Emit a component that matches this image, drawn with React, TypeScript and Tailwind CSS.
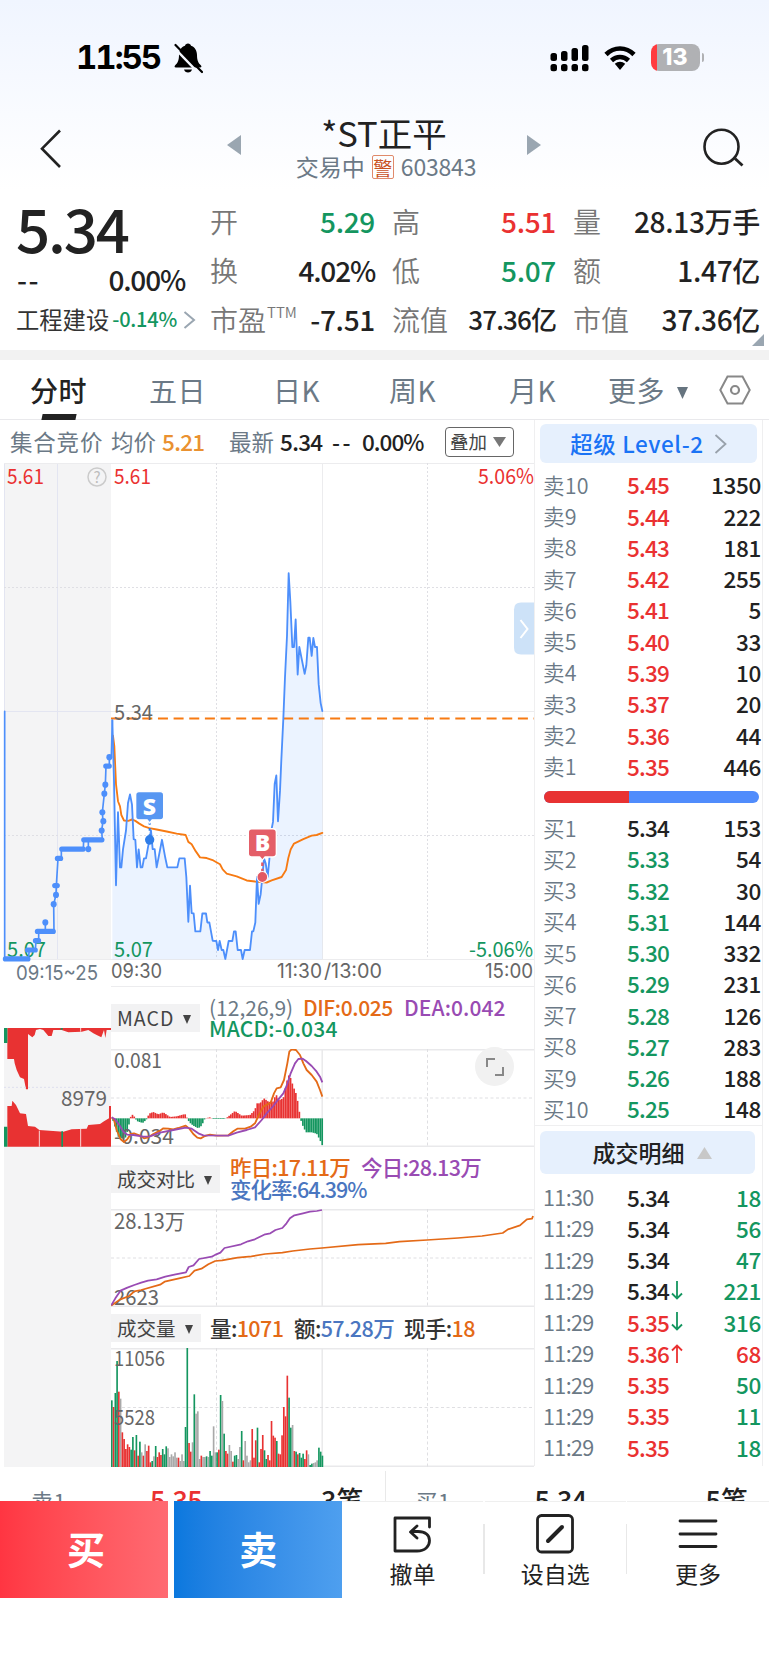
import type { ReactNode } from "react";
import clsx from "clsx";

type Tone = "red" | "green" | "black" | "orange" | "purple" | "blue" | "gray";

const toneClass: Record<Tone, string> = {
  red: "text-[#ea3131]",
  green: "text-[#14965f]",
  black: "text-[#222222]",
  orange: "text-[#e46a17]",
  purple: "text-[#994bb3]",
  blue: "text-[#4a76c0]",
  gray: "text-[#6b7986]",
};

const RED = "#e83232";
const GREEN = "#14965f";
const GRAY = "#a9a9a9";
const BLUE = "#4d8ffb";
const ORANGE = "#e46a17";
const PURPLE = "#994bb3";

const sells = [
  ["卖10", "5.45", "1350"],
  ["卖9", "5.44", "222"],
  ["卖8", "5.43", "181"],
  ["卖7", "5.42", "255"],
  ["卖6", "5.41", "5"],
  ["卖5", "5.40", "33"],
  ["卖4", "5.39", "10"],
  ["卖3", "5.37", "20"],
  ["卖2", "5.36", "44"],
  ["卖1", "5.35", "446"],
];

const buys = [
  ["买1", "5.34", "153"],
  ["买2", "5.33", "54"],
  ["买3", "5.32", "30"],
  ["买4", "5.31", "144"],
  ["买5", "5.30", "332"],
  ["买6", "5.29", "231"],
  ["买7", "5.28", "126"],
  ["买8", "5.27", "283"],
  ["买9", "5.26", "188"],
  ["买10", "5.25", "148"],
];

const trades: { time: string; price: string; tone: Tone; dir?: "up" | "down"; vol: string; volTone: Tone }[] = [
  { time: "11:30", price: "5.34", tone: "black", vol: "18", volTone: "green" },
  { time: "11:29", price: "5.34", tone: "black", vol: "56", volTone: "green" },
  { time: "11:29", price: "5.34", tone: "black", vol: "47", volTone: "green" },
  { time: "11:29", price: "5.34", tone: "black", dir: "down", vol: "221", volTone: "green" },
  { time: "11:29", price: "5.35", tone: "red", dir: "down", vol: "316", volTone: "green" },
  { time: "11:29", price: "5.36", tone: "red", dir: "up", vol: "68", volTone: "red" },
  { time: "11:29", price: "5.35", tone: "red", vol: "50", volTone: "green" },
  { time: "11:29", price: "5.35", tone: "red", vol: "11", volTone: "green" },
  { time: "11:29", price: "5.35", tone: "red", vol: "18", volTone: "green" },
];

// Charts keep their points at about three units per pixel, scaled down in the svg groups
const pricePoints =
  "337,785 342,960 348,1264 354,1052 360,1212 364,1212 369,1160 378,1105 384,1025 390,1000 396,1030 401,1130 406,1132 411,1212 416,1160 422,1212 427,1212 432,1186 438,1186 448,1132 453,1105 458,1159 464,1159 470,1212 486,1132 496,1185 502,1212 532,1212 538,1186 554,1186 559,1240 565,1370 570,1265 575,1345 581,1346 586,1398 601,1398 607,1346 618,1346 622,1372 628,1372 638,1425 649,1426 654,1452 659,1426 665,1452 670,1452 676,1478 686,1426 697,1426 702,1398 707,1398 713,1452 723,1452 728,1478 734,1452 750,1452 756,1398 760,1398 766,1372 771,1240 776,1318 782,1290 787,1240 792,1186 797,1200 803,1240 808,1190 814,1105 819,1080 824,970 829,945 834,1078 840,990 844,900 850,780 855,660 861,540 866,358 871,440 877,572 882,572 887,492 893,652 898,572 914,650 919,625 925,545 929,545 935,598 940,546 945,572 951,572 956,680 962,735 967,758";

const avgPoints =
  "339,830 343,860 348,970 354,1020 360,1035 364,1060 372,1076 385,1077 396,1073 406,1077 418,1085 432,1093 448,1098 470,1102 500,1108 530,1114 557,1118 565,1138 575,1145 587,1165 600,1183 620,1185 640,1192 660,1203 668,1218 680,1230 710,1238 740,1250 765,1253 800,1256 815,1250 845,1240 858,1220 865,1185 872,1160 882,1143 910,1130 935,1120 950,1118 967,1112";

const auctionPoints =
  "14,759 14,1478 85,1478 88,1452 106,1452 108,1425 116,1425 116,1398 136,1398 136,1372 136,1398 162,1398 161,1319 168,1292 169,1265 174,1186 184,1186 184,1159 250,1159 251,1132 265,1132 265,1159 265,1132 307,1132 305,1105 309,1078 307,1052 313,998 316,972 318,918 328,918 328,892 334,892 337,785";

const auctionRuns = [
  [16, 84, 1478],
  [82, 106, 1452],
  [106, 116, 1425],
  [112, 160, 1398],
  [172, 182, 1186],
  [185, 250, 1159],
  [251, 306, 1132],
  [317, 328, 918],
  [164, 172, 1265],
];

const auctionDots = [
  [136, 1372], [161, 1319], [168, 1292], [265, 1159], [305, 1105], [310, 1078],
  [307, 1052], [313, 998], [316, 972], [328, 892],
];

const difPoints =
  "335,412 342,420 350,450 362,478 372,486 382,478 392,462 402,460 418,466 432,475 445,472 460,462 480,452 490,445 505,446 520,448 535,444 557,437 568,446 580,462 592,473 602,475 615,468 630,464 650,467 685,466 700,454 712,446 735,446 752,440 765,430 775,408 790,380 812,368 822,340 830,325 842,322 852,300 862,250 868,215 875,208 888,210 900,225 910,250 920,270 935,285 950,305 960,330 967,350";

const deaPoints =
  "335,412 345,418 358,435 370,455 382,464 400,465 430,470 450,469 480,458 520,450 557,443 575,446 595,460 610,466 685,467 710,458 740,450 765,442 785,420 800,400 820,378 835,358 850,340 862,312 872,280 885,250 895,237 908,236 918,243 935,258 950,275 960,290 967,307";

const macdKeys = [
  [337, 0], [345, -25], [355, -55], [365, -60], [375, -62], [385, -30], [390, 0], [396, 12], [405, 3],
  [410, -8], [428, -14], [438, -5], [442, 0], [447, 14], [460, 19], [475, 12], [490, 18], [510, 4], [530, 6],
  [555, 13], [562, 0], [568, -12], [580, -22], [595, -30], [605, -22], [615, 0], [630, 3], [640, -2],
  [675, -2], [683, 4], [705, 22], [725, 8], [750, 10], [765, 25], [770, 45], [780, 45], [792, 60],
  [805, 50], [818, 48], [828, 72], [838, 55], [850, 60], [860, 110], [868, 133], [880, 95], [890, 70],
  [900, 8], [905, -15], [918, -42], [935, -42], [950, -46], [960, -65], [970, -88],
];

const macdAt = (x: number) => {
  for (let i = 1; i < macdKeys.length; i++) {
    const [x0, v0] = macdKeys[i - 1];
    const [x1, v1] = macdKeys[i];
    if (x <= x1) return v0 + ((v1 - v0) * (x - x0)) / (x1 - x0);
  }
  return 0;
};

const todayPoints =
  "323,466 335,445 350,422 370,413 390,405 410,398 430,392 455,388 480,380 510,373 540,367 548,351 562,346 578,327 615,320 628,313 640,308 652,294 700,283 720,274 740,268 770,253 785,250 800,240 820,234 832,220 842,205 855,196 880,190 900,185 920,183 935,180";

const yesterdayPoints =
  "323,467 350,448 375,438 390,424 410,420 465,404 478,395 520,385 550,378 565,362 585,356 605,343 625,333 645,331 690,323 730,319 770,312 820,308 850,303 900,297 935,294 1040,284 1120,280 1160,275 1240,270 1330,264 1400,258 1460,249 1475,238 1510,226 1530,208 1545,206 1548,198";

// r = up, g = down, y = flat
const volumes =
  "g200 r180 g222 g318 r226 y205 r104 r84 r54 r68 r60 g52 g90 r50 g96 r34 g76 y44 r34 y68 r48 r64 r14 g18 y32 g63 r30 r44 r36 g54 g38 g62 y56 y30 y38 y32 y44 y28 r28 y18 y38 y18 g120 g357 r72 r46 y74 g218 y160 y167 y24 r34 y30 y30 g32 y30 g48 g34 y122 y44 g44 r52 g216 y198 g100 r48 r40 y66 y48 r16 g34 g36 y24 y60 g108 r20 y78 y34 y14 y20 r114 r28 r80 g118 r14 r54 r96 g50 g24 r36 r20 r138 r94 r88 g78 r40 r38 r95 r180 r152 r274 g208 g118 y126 r48 g46 r38 g42 g28 g40 r24 r50 y38 g6 g10 y12 y14 y20 g58 g46 g34"
    .split(" ");

const volumeColor: Record<string, string> = { r: RED, g: GREEN, y: GRAY };

type LabelProps = {
  x: number;
  y: number;
  w?: number;
  size?: number;
  fill?: string;
  children: string;
};

const Label = ({ x, y, w, size = 21, fill = "#666666", children }: LabelProps) => (
  <text x={x} y={y} fontSize={size} fill={fill} textLength={w} lengthAdjust="spacingAndGlyphs">
    {children}
  </text>
);

const StatusBar = () => (
  <div className="flex h-[115px] items-center pl-[76px] pr-[65px]">
    <span className="w-[97px] whitespace-nowrap font-['Inter'] text-[33px] font-bold tabular-nums leading-none tracking-[-2px] text-black">11:55</span>
    <svg className="h-[32px] w-[30px]" viewBox="0 0 30 32">
      <path d="M15 1.500c-1.600 0-2.700 1-3 2.200C8.200 5 6 8.500 6 13c0 6-1.500 8-4 10.500-.8 1-.4 2 .8 2h24.400c1.200 0 1.600-1 .8-2C25.500 21 24 19 24 13c0-4.500-2.200-8-6-9.300-.3-1.200-1.400-2.200-3-2.200z" />
      <path d="M11 27.500h8c-.5 1.900-2 3-4 3s-3.500-1.100-4-3z" />
      <path d="M.5 5l26 27" stroke="#f5f8ff" strokeWidth="2.400" />
      <path d="M2.500 3l26.500 27" stroke="#000" strokeWidth="2.200" strokeLinecap="round" />
    </svg>
    <svg className="ml-auto mr-[14px] h-[28px] w-[39px]" viewBox="0 0 39 28">
      {[9, 7, 4, 1].map((top, i) => (
        <g key={top}>
          <rect x={0.500 + i * 10.500} y={top} width="6.500" height={17 - top} rx="2.500" />
          <rect x={0.500 + i * 10.500} y="20" width="6.500" height="7.300" rx="2.500" />
        </g>
      ))}
    </svg>
    <svg className="mr-[14px] h-[26px] w-[34px]" viewBox="0 0 34 26">
      <path d="M3 9.500c8-8 20-8 28 0" fill="none" stroke="#000" strokeWidth="4.600" />
      <path d="M8.500 15.500c5-4.700 12-4.700 17 0" fill="none" stroke="#000" strokeWidth="4.600" />
      <path d="M17 25l-5.200-6.300c3-2.700 7.400-2.700 10.400 0z" />
    </svg>
    <div className="flex items-center">
      <div className="flex h-[27px] w-[49px] items-center justify-center rounded-[8px] bg-linear-to-r from-[#ff3b3f] from-[13%] to-[#b0b1b4] to-[13%] font-['Inter'] text-[23px] font-extrabold leading-none text-white">
        13
      </div>
      <div className="ml-[2px] h-[9px] w-[2.500px] rounded-r-full bg-[#b0b1b4]" />
    </div>
  </div>
);

const NavBar = () => (
  <div className="flex h-[75px] justify-between pl-[39px] pr-[24px]">
    <svg className="mt-[14px] h-[40px] w-[24px]" viewBox="0 0 24 40">
      <path d="M21 1.500L3 19.700 21 38" fill="none" stroke="#222" strokeWidth="2.600" />
    </svg>
    <div className="mr-[-2px] flex gap-[51px]">
      <svg className="mt-[20px] h-[20px] w-[14px]" viewBox="0 0 14 20">
        <path d="M14 0v20L0 10z" fill="#9aa6b1" />
      </svg>
      <div className="flex w-[184px] flex-col items-center">
        <h1 className="-mt-[1px] whitespace-nowrap text-[34.500px] leading-[37px] text-[#222]">*ST正平</h1>
        <div className="-mt-[1px] ml-[4px] flex items-center gap-[7px] whitespace-nowrap text-[23px] leading-[32px] text-[#6b7986]">
          交易中
          <span className="mt-[2px] flex h-[24px] w-[22px] items-center justify-center rounded-[2px] border border-[#e08a6b] text-[19px] leading-none text-[#c9521f]">警</span>
          <span className="tracking-[-0.200px]">603843</span>
        </div>
      </div>
      <svg className="mt-[20px] h-[20px] w-[14px]" viewBox="0 0 14 20">
        <path d="M0 0v20l14-10z" fill="#9aa6b1" />
      </svg>
    </div>
    <svg className="mt-[12px] h-[42px] w-[42px]" viewBox="0 0 42 42">
      <circle cx="18.500" cy="19.700" r="17" fill="none" stroke="#222" strokeWidth="2.600" />
      <path d="M32 31.500l7.500 7" stroke="#222" strokeWidth="2.800" />
    </svg>
  </div>
);

const Stat = ({ label, value, tone = "black", sup, tight }: { label: string; value: string; tone?: Tone; sup?: string; tight?: boolean }) => (
  <div className="flex items-center justify-between whitespace-nowrap text-[28px] leading-none">
    <span className="font-[350] text-[#777]">
      {label}
      {sup && <sup className="-top-[13px] ml-[1px] text-[15px] leading-none">{sup}</sup>}
    </span>
    <span
      className={clsx(
        "font-medium",
        toneClass[tone],
        tight ? "text-[26px] tracking-[-0.900px]" : value.endsWith("%") ? "tracking-[-1.200px]" : "tracking-[-0.300px]"
      )}
    >
      {value}
    </span>
  </div>
);

const Quote = () => (
  <div className="relative flex h-[160px] pr-[8px]">
    <div className="w-[210px] shrink-0 pl-[16px]">
      <div className="mt-[5px] text-[60px] font-medium leading-[64px] tracking-[-2.200px] text-[#222]">5.34</div>
      <div className="mt-[4px] flex justify-between pl-[1px] pr-[25px] text-[28px] font-medium leading-[32px] tracking-[-1.200px] text-[#222]">
        <span className="tracking-[1.500px]">--</span>
        <span>0.00%</span>
      </div>
      <div className="mt-[8px] flex items-center whitespace-nowrap text-[23.300px] leading-[32px] text-[#333]">
        工程建设
        <span className="ml-[3px] text-[20px] font-medium tracking-[-0.200px] text-[#14965f]">-0.14%</span>
        <svg className="ml-[6px] mt-[2px] h-[18px] w-[13px]" viewBox="0 0 13 18">
          <path d="M1.500 1l9.500 8-9.500 8" fill="none" stroke="#9aa6b1" strokeWidth="2" />
        </svg>
      </div>
    </div>
    <div className="grid h-[153px] flex-1 grid-cols-[165px_164px_187px] grid-rows-3 gap-x-[17px] pt-[6px]">
      <Stat label="开" value="5.29" tone="green" />
      <Stat label="高" value="5.51" tone="red" />
      <Stat label="量" value="28.13万手" />
      <Stat label="换" value="4.02%" />
      <Stat label="低" value="5.07" tone="green" />
      <Stat label="额" value="1.47亿" />
      <Stat label="市盈" sup="TTM" value="-7.51" />
      <Stat label="流值" value="37.36亿" tight />
      <Stat label="市值" value="37.36亿" />
    </div>
    <svg className="absolute bottom-[4px] right-[5px] h-[12px] w-[12px]" viewBox="0 0 12 12">
      <path d="M12 0v12H0z" fill="#9aa6b1" />
    </svg>
  </div>
);

const Tabs = () => (
  <div className="flex h-[60px] items-center border-b-[1.500px] border-[#e9e9ec] text-[28px] leading-none tracking-[0.600px] text-[#6b7986]">
    <div className="relative ml-[30px] w-[119px] font-medium text-[#222]">
      分时
      <div className="absolute -bottom-[16px] left-[12px] h-[6px] w-[34px] -skew-x-12 bg-[#222]" />
    </div>
    <div className="w-[124px]">五日</div>
    <div className="w-[116px]">日K</div>
    <div className="w-[120px]">周K</div>
    <div className="w-[99px]">月K</div>
    <div className="w-[69px]">更多</div>
    <svg className="mt-[7px] h-[12px] w-[11px]" viewBox="0 0 12 13">
      <path d="M0 0h12L6 13z" fill="#66747f" />
    </svg>
    <svg className="ml-[31px] h-[30px] w-[32px]" viewBox="0 0 32 30">
      <path d="M8.500 1.500h15L30.700 15l-7.200 13.500h-15L1.300 15z" fill="none" stroke="#888" strokeWidth="2" />
      <circle cx="16" cy="15" r="4" fill="none" stroke="#888" strokeWidth="2.200" />
    </svg>
  </div>
);

const InfoRow = () => (
  <div className="flex h-[43px] items-center whitespace-nowrap pl-[10px] text-[22.500px] leading-none text-[#6b7986]">
    <span className="w-[101px] tracking-[0.800px]">集合竞价</span>
    <span>均价</span>
    <span className="ml-[6px] w-[67px] font-medium tracking-[-0.700px] text-[#ea9130]">5.21</span>
    <span>最新</span>
    <span className="ml-[6px] w-[52px] font-medium tracking-[-0.700px] text-[#222]">5.34</span>
    <span className="w-[30px] font-medium tracking-[2.500px] text-[#222]">--</span>
    <span className="w-[83px] font-medium tracking-[-1px] text-[#222]">0.00%</span>
    <span className="flex h-[30px] w-[69px] items-center gap-[6px] rounded-[4px] border-[1.500px] border-[#666] pl-[4px] text-[18.500px] text-[#444]">
      叠加
      <svg className="h-[10px] w-[13px]" viewBox="0 0 13 10">
        <path d="M0 0h13L6.500 10z" fill="#777" />
      </svg>
    </span>
  </div>
);

const PriceChart = () => (
  <svg className="block h-[523px] w-[534px]" viewBox="0 463 534 523">
    <rect x="4" y="463" width="107" height="496" fill="#f4f4f5" />
    <path d="M4.500 463v496M57.500 463v496M4 711.500h107" stroke="#e3e5f1" />
    <path d="M4 463.500h530M111 711.500h423M4 959.500h530M322.500 463v496" stroke="#ececee" />
    <path d="M4 587.500h530M4 835.500h530M216.500 463v496M427.500 463v496" stroke="#dfdfe4" strokeDasharray="2 2" />
    <g transform="translate(0 450) scale(0.33333 0.34435)">
      <polygon points={`337,1479 ${pricePoints} 967,1479`} fill={BLUE} fillOpacity="0.110" />
    </g>
    <path d="M111 718.500h423" stroke="#f77a12" strokeWidth="2" strokeDasharray="10 5.650" />
    <Label x={7} y={484} w={37} fill="#ea3131">5.61</Label>
    <Label x={114} y={484} w={37} fill="#ea3131">5.61</Label>
    <Label x={114} y={719.500} w={39}>5.34</Label>
    <Label x={7} y={956.500} w={39} fill={GREEN}>5.07</Label>
    <Label x={114} y={956.500} w={39} fill={GREEN}>5.07</Label>
    <Label x={478} y={484} w={56} fill="#ea3131">5.06%</Label>
    <Label x={469} y={956.500} w={64} fill={GREEN}>-5.06%</Label>
    <g transform="translate(0 450) scale(0.33333 0.34435)" fill="none" strokeLinejoin="round" strokeLinecap="round">
      <polyline points={auctionPoints} stroke={BLUE} strokeWidth="5" />
      {auctionRuns.map(([x0, x1, y]) => (
        <path key={`${x0}-${y}`} d={`M${x0} ${y}H${x1}`} stroke={BLUE} strokeWidth="15" />
      ))}
      {auctionDots.map(([cx, cy]) => (
        <circle key={`${cx}-${cy}`} cx={cx} cy={cy} r="9" fill={BLUE} />
      ))}
      <polyline points={avgPoints} stroke="#f77a12" strokeWidth="5.500" />
      <polyline points={pricePoints} stroke={BLUE} strokeWidth="5.500" />
      <path d="M449 1080v40" stroke="#2f7de8" strokeWidth="6" strokeDasharray="8 10" strokeLinecap="butt" />
      <circle cx="449" cy="1132" r="14" fill="#2f7de8" />
      <path d="M417 992h64q10 0 10 10v62q0 10-10 10h-24l-8 9-8-9h-24q-10 0-10-10v-62q0-10 10-10z" fill="#5897f2" stroke="#fff" strokeWidth="4" />
      <path d="M787 1180v50" stroke="#e25863" strokeWidth="7" strokeDasharray="10 8" strokeLinecap="butt" />
      <circle cx="787" cy="1240" r="16" fill="#e25863" stroke="#fff" strokeWidth="3" />
      <path d="M755 1100h64q10 0 10 10v62q0 10-10 10h-24l-8 9-8-9h-24q-10 0-10-10v-62q0-10 10-10z" fill="#e45e68" stroke="#fff" strokeWidth="4" />
    </g>
    <text x="149.500" y="814.500" fontSize="23" textAnchor="middle" fill="#fff" className="font-['Open_Sans'] font-extrabold">S</text>
    <text x="262.500" y="851" fontSize="23" textAnchor="middle" fill="#fff" className="font-['Open_Sans'] font-extrabold">B</text>
    <circle cx="97" cy="477" r="9" fill="none" stroke="#cbcbcb" strokeWidth="1.500" />
    <text x="97" y="482.500" fontSize="15" textAnchor="middle" fill="#bdbdbd">?</text>
    <path d="M534 602.500h-13q-7 0-7 7v38q0 7 7 7h13z" fill="#cde2f8" />
    <path d="M520.500 620l7 9-7 9" fill="none" stroke="#fff" strokeWidth="2" />
    <g className="font-['Inter']">
      <Label x={16} y={979.500} w={82} size={20} fill="#6b7986">09:15~25</Label>
      <Label x={111} y={978} w={51} size={20}>09:30</Label>
      <Label x={277} y={978} w={45} size={20}>11:30</Label>
      <Label x={324} y={978} w={58} size={20}>/13:00</Label>
      <Label x={485} y={978} w={48} size={20}>15:00</Label>
    </g>
  </svg>
);

const AuctionVolume = () => (
  <svg className="block h-[119px] w-[107px]" viewBox="4 1028 107 119">
    <g transform="translate(0 980) scale(0.33333)">
      <polygon points="22,143 22,237 42,237 44,250 50,270 60,292 72,297 78,328 84,328 84,162 97,172 104,165 108,150 120,147 130,150 145,168 155,168 160,150 185,150 205,157 245,155 265,150 280,160 290,165 304,172 312,150 316,174 320,150 333,150 333,143" fill={RED} />
      <polygon points="22,500 22,378 35,378 37,362 48,375 60,400 78,402 84,438 105,440 118,450 190,455 215,448 260,446 265,435 300,432 312,424 327,415 327,378 333,378 333,500" fill={RED} />
      <path d="M12 143h10v46H12zM12 440h10v60H12zM184 454h5v46h-5zM182 143h6v6h-6z" fill={GREEN} />
      <path d="M242 143v12M242 447v53M118 452v48" stroke="#fff" strokeWidth="3" strokeOpacity="0.800" />
      <path d="M12 322h321" stroke="#dedfee" strokeWidth="3" strokeDasharray="6 6" />
    </g>
    <Label x={61} y={1106} w={46}>8979</Label>
  </svg>
);

const Grid = ({ h }: { h: number }) => (
  <>
    <path d={`M0 .75H423M0 ${h - 0.750}H423M211.200 0V${h}`} stroke="#e9e9eb" strokeWidth="1.500" />
    <path d={`M0 ${h / 2}H423M105.500 0V${h}M316.500 0V${h}`} stroke="#dfdfe2" strokeDasharray="3 2.500" />
  </>
);

const IndicatorHead = ({ name, width, children, className }: { name: string; width: string; children: ReactNode; className?: string }) => (
  <div className={clsx("flex whitespace-nowrap", className)}>
    <div className={clsx("flex h-[28px] items-center gap-[9px] bg-[#f2f2f3] pl-[6px] text-[19.500px] leading-none text-[#444]", width)}>
      {name}
      <svg className="mt-[3px] h-[9px] w-[8px]" viewBox="0 0 8 9">
        <path d="M0 0h8L4 9z" fill="#444" />
      </svg>
    </div>
    {children}
  </div>
);

const MacdPanel = () => {
  const bars = Array.from({ length: 120 }, (_, i) => 337 + i * 5.270);
  return (
    <div>
      <IndicatorHead name="MACD" width="w-[89px] tracking-[1px]" className="h-[63px] border-t-[1.500px] border-[#ececee] pt-[17px]">
        <div className="-mt-[7px] ml-[9px] text-[21px] font-medium leading-[21px]">
          <div className="flex">
            <span className="w-[94px] font-normal text-[#6b7986]">(12,26,9)</span>
            <span className="w-[101px] tracking-[-0.400px] text-[#e46a17]">DIF:0.025</span>
            <span className="tracking-[0.100px] text-[#994bb3]">DEA:0.042</span>
          </div>
          <div className="tracking-[0.200px] text-[#14965f]">MACD:-0.034</div>
        </div>
      </IndicatorHead>
      <div className="relative">
        <svg className="block h-[98px] w-[423px]" viewBox="0 0 423 98">
          <Grid h={98} />
          <g transform="translate(-111 -69) scale(0.33333)">
            {bars.map((x) => {
              const v = macdAt(x + 2.500);
              return <rect key={x} x={x} y={v > 0 ? 415 - v : 415} width="5" height={Math.abs(v)} fill={v > 0 ? RED : GREEN} />;
            })}
          </g>
          <Label x={3} y={18.500} w={48}>0.081</Label>
          <Label x={3} y={95} w={60}>-0.034</Label>
          <g transform="translate(-111 -69) scale(0.33333)" fill="none" strokeWidth="5.500" strokeLinejoin="round">
            <polyline points={difPoints} stroke={ORANGE} />
            <polyline points={deaPoints} stroke={PURPLE} />
          </g>
        </svg>
        <div className="absolute -top-[2px] left-[364px] flex h-[39px] w-[39px] items-center justify-center rounded-full bg-[#f1f1f1]">
          <svg className="h-[18px] w-[18px]" viewBox="0 0 18 18">
            <path d="M1 9V1h8M9 17h8V9" fill="none" stroke="#888" strokeWidth="2" />
          </svg>
        </div>
      </div>
    </div>
  );
};

const ComparePanel = () => (
  <div>
    <IndicatorHead name="成交对比" width="w-[109px]" className="h-[62px] pt-[18px]">
      <div className="-mt-[9px] ml-[10px] text-[21.500px] font-medium leading-[22px] tracking-[-0.700px]">
        <div className="flex">
          <span className="w-[131px] text-[#e46a17]">昨日:17.11万</span>
          <span className="text-[#994bb3]">今日:28.13万</span>
        </div>
        <div className="tracking-[-1px] text-[#4a76c0]">变化率:64.39%</div>
      </div>
    </IndicatorHead>
    <svg className="block h-[98px] w-[423px]" viewBox="0 0 423 98">
      <Grid h={98} />
      <Label x={3} y={20} w={71}>28.13万</Label>
      <Label x={3} y={96} w={45}>2623</Label>
      <g transform="translate(-111 -59) scale(0.34435 0.33333)" fill="none" strokeWidth="5.200" strokeLinejoin="round">
        <polyline points={yesterdayPoints} stroke={ORANGE} />
        <polyline points={todayPoints} stroke={PURPLE} />
      </g>
    </svg>
  </div>
);

const VolumePanel = () => (
  <div>
    <IndicatorHead name="成交量" width="w-[90px]" className="h-[41px] pt-[7px]">
      <div className="ml-[9px] flex text-[21.500px] font-medium leading-[27px] tracking-[-0.600px] text-[#333]">
        <span className="w-[84px]">量:<span className="text-[#e46a17]">1071</span></span>
        <span className="w-[110px]">额:<span className="text-[#4a76c0]">57.28万</span></span>
        <span>现手:<span className="text-[#e46a17]">18</span></span>
      </div>
    </IndicatorHead>
    <svg className="block h-[119px] w-[423px]" viewBox="0 0 423 119">
      <Grid h={119} />
      {volumes.map((v, i) => {
        const h = Number(v.slice(1)) / 3;
        return <rect key={i} x={i * 1.755} y={119 - h} width="1.650" height={h} fill={volumeColor[v[0]]} />;
      })}
      <Label x={3} y={17.500} w={51}>11056</Label>
      <Label x={3} y={77} w={41}>5528</Label>
    </svg>
  </div>
);

const BookRow = ({ name, price, volume, tone }: { name: string; price: string; volume: string; tone: Tone }) => (
  <div className="flex h-[31.270px] items-center text-[22.500px] leading-none">
    <span className="w-[84px] text-[21.500px] font-[350] tracking-[0.200px] text-[#6b7986]">{name}</span>
    <span className={clsx("font-medium tracking-[-0.800px]", toneClass[tone])}>{price}</span>
    <span className="ml-auto font-medium tracking-[-0.300px] text-[#222]">{volume}</span>
  </div>
);

const Arrow = ({ up }: { up: boolean }) => (
  <svg className="ml-[2px] h-[19px] w-[12px]" viewBox="0 0 12 19">
    <path
      d={up ? "M6 19V1.500M1 6.500l5-5 5 5" : "M6 0v17.500M1 12.500l5 5 5-5"}
      fill="none"
      stroke={up ? "#ea3131" : GREEN}
      strokeWidth="1.800"
    />
  </svg>
);

const OrderBook = () => (
  <div className="flex h-[1046px] w-[229px] flex-col border-x-[1.500px] border-[#efeff0]">
    <div className="ml-[5px] mt-[4px] flex h-[39px] w-[217px] shrink-0 items-center justify-center rounded-[6px] bg-[#e6f0fd] text-[22.500px] font-medium leading-none tracking-[0.600px] text-[#1a73f5]">
      超级 Level-2
      <svg className="ml-[10px] mt-[1px] h-[20px] w-[13px]" viewBox="0 0 13 20">
        <path d="M1.500 1l10 9-10 9" fill="none" stroke="#98a1ab" strokeWidth="1.800" />
      </svg>
    </div>
    <div className="mt-[6px] pl-[8px] pr-px">
      {sells.map(([name, price, volume]) => (
        <BookRow key={name} name={name} price={price} volume={volume} tone="red" />
      ))}
    </div>
    <div className="ml-[9px] mt-[9px] flex h-[12px] w-[215px] shrink-0 overflow-hidden rounded-full bg-[#508cfc]">
      <div className="w-[85px] bg-[#e83232]" />
    </div>
    <div className="mt-[9px] border-b border-[#efeff0] pb-px pl-[8px] pr-px">
      {buys.map(([name, price, volume], i) => (
        <BookRow key={name} name={name} price={price} volume={volume} tone={i === 0 ? "black" : "green"} />
      ))}
    </div>
    <div className="ml-[5px] mt-[5px] flex h-[43px] w-[215px] shrink-0 items-center justify-center rounded-[6px] bg-[#e6f0fd] pl-[9px] text-[23px] font-medium leading-none text-[#222]">
      成交明细
      <svg className="ml-[12px] mt-[1px] h-[12px] w-[15px]" viewBox="0 0 15 12">
        <path d="M0 12h15L7.500 0z" fill="#c8c8c8" />
      </svg>
    </div>
    <div className="mt-[7px] pl-[8px] pr-px">
      {trades.map((t, i) => (
        <div key={i} className="flex h-[31.250px] items-center text-[22.500px] leading-none">
          <span className="w-[84px] text-[21.500px] tracking-[-0.600px] text-[#6b7986]">{t.time}</span>
          <span className={clsx("font-medium tracking-[-0.800px]", toneClass[t.tone])}>{t.price}</span>
          {t.dir && <Arrow up={t.dir === "up"} />}
          <span className={clsx("ml-auto font-medium tracking-[-0.300px]", toneClass[t.volTone])}>{t.vol}</span>
        </div>
      ))}
    </div>
  </div>
);

const Level = ({ name, price, tone, orders }: { name: string; price: string; tone: Tone; orders: string }) => (
  <div className="flex w-[385px] items-start justify-between whitespace-nowrap pl-[31px] pr-[21px] pt-[13px] leading-[40px]">
    <span className="w-[119px] text-[22px] tracking-[0.600px] text-[#6b7986]">{name}</span>
    <span className={clsx("flex-1 text-[27px] font-medium tracking-[-0.500px]", toneClass[tone])}>{price}</span>
    <span className="text-[27px] font-medium text-[#222]">{orders}</span>
  </div>
);

const Tool = ({ label, width, children }: { label: string; width: string; children: ReactNode }) => (
  <div className={clsx("flex flex-col items-center pt-[11px] text-[23px] leading-none text-[#222]", width)}>
    <svg className="h-[42px] w-[42px]" viewBox="0 0 42 42" fill="none" stroke="#222" strokeWidth="2.800">
      {children}
    </svg>
    <span className="mt-[7px]">{label}</span>
  </div>
);

const BottomBar = () => (
  <div className="flex h-[164px] items-start bg-white">
    <button className="h-[97px] w-[168px] bg-linear-to-r from-[#ff3542] to-[#ff6a72] pb-[4px] pl-[4px] text-[38px] font-bold text-white">买</button>
    <button className="ml-[6px] h-[97px] w-[168px] bg-linear-to-r from-[#0a78de] to-[#4e9fef] pb-[4px] pl-[1px] text-[38px] font-bold text-white">卖</button>
    <Tool label="撤单" width="w-[142px] border-t border-[#efefef]">
      <path d="M38.500 14V5H4v33h22c8 0 12.500-4.500 12.500-10.500S34 18.500 27 18.500h-6M26 13l-6.500 6 6.500 6" strokeLinejoin="round" strokeLinecap="round" />
    </Tool>
    <div className="mt-[23px] h-[50px] w-[1.500px] bg-[#e8e8e8]" />
    <Tool label="设自选" width="w-[141px] border-t border-[#efefef]">
      <rect x="3.500" y="2.500" width="35" height="36.500" rx="4" />
      <path d="M14 28L28 14" strokeWidth="4" strokeLinecap="round" />
    </Tool>
    <div className="mt-[23px] h-[50px] w-[1.500px] bg-[#e8e8e8]" />
    <Tool label="更多" width="w-[142px] border-t border-[#efefef]">
      <path d="M3 8h36M3 21h36M3 33.500h36" strokeLinecap="round" />
    </Tool>
  </div>
);

const App = () => (
  <div className="h-[1665px] w-[769px] overflow-hidden bg-white font-['Noto_Sans_CJK_SC',sans-serif]">
    <div className="bg-linear-to-b from-[#f0f5ff] to-white">
      <StatusBar />
      <NavBar />
    </div>
    <Quote />
    <div className="h-[10px] bg-[#f2f2f2]" />
    <Tabs />
    <div className="flex h-[1047px]">
      <div className="w-[534px] shrink-0">
        <InfoRow />
        <PriceChart />
        <div className="flex">
          <div className="ml-[4px] mt-[42px] h-[439px] w-[107px] bg-[#f4f4f5]">
            <AuctionVolume />
          </div>
          <div className="w-[423px]">
            <MacdPanel />
            <ComparePanel />
            <VolumePanel />
          </div>
        </div>
      </div>
      <OrderBook />
    </div>
    <div className="flex h-[34px] overflow-hidden">
      <Level name="卖1" price="5.35" tone="red" orders="3笔" />
      <div className="-mr-[1px] mt-[4px] h-[30px] w-px bg-[#e9e9e9]" />
      <Level name="买1" price="5.34" tone="black" orders="5笔" />
    </div>
    <BottomBar />
  </div>
);

export default App;
